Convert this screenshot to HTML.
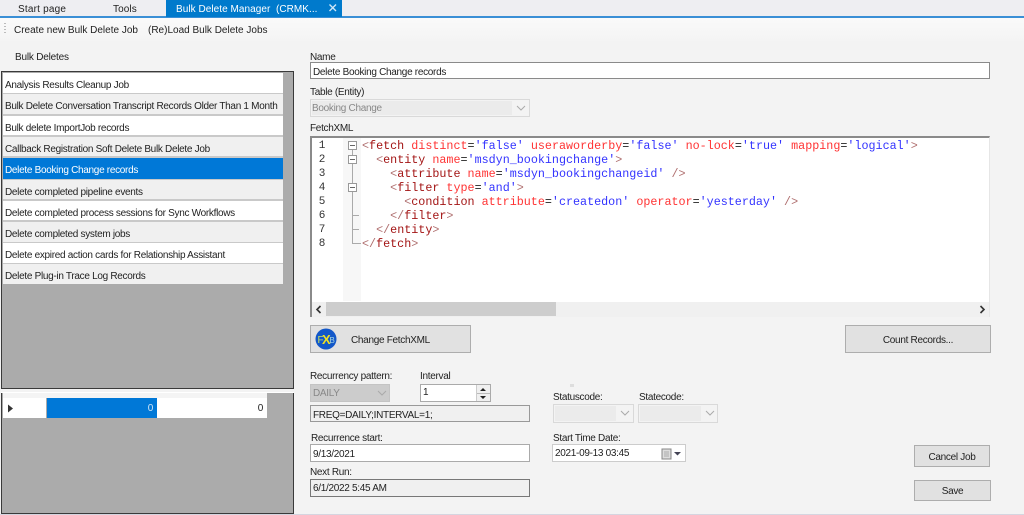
<!DOCTYPE html>
<html><head><meta charset="utf-8"><style>
html,body{margin:0;padding:0;width:1024px;height:515px;overflow:hidden;background:#f3f3f3}
body{position:relative;font-family:"Liberation Sans",sans-serif;font-size:10px;color:#222;letter-spacing:-.3px}
.a{position:absolute;white-space:nowrap}
.t{position:absolute;white-space:nowrap;line-height:12px}
.r{position:absolute;left:3px;width:280px;height:19.5px;line-height:24px;padding-top:1px;padding-left:2px;box-sizing:border-box;overflow:hidden}
.b{position:absolute;background:#e1e1e1;border:1px solid #adadad;box-sizing:border-box;text-align:center;color:#222}
.i{position:absolute;box-sizing:border-box;border:1px solid #a0a0a0;background:#fff;padding-left:2px;color:#222}
.c{position:absolute;left:362px;font-family:"Liberation Mono",monospace;font-size:11.73px;line-height:14px;white-space:pre;color:#a31515;letter-spacing:0}
.c b{font-weight:normal;color:#f33}.c i{font-style:normal;color:#33f}.c u{text-decoration:none;color:#222}
.c s{text-decoration:none;color:#b07070}
.n{position:absolute;left:315px;width:14px;text-align:center;font-family:"Liberation Mono",monospace;font-size:11px;line-height:14px;color:#333;letter-spacing:0}
.f{position:absolute;left:348px;width:9px;height:9px;border:1px solid #999;background:#fff;box-sizing:border-box}
.f:after{content:"";position:absolute;left:1px;top:3px;width:5px;height:1px;background:#666}
</style></head><body>

<!-- tab bar -->
<div class="a" style="left:0;top:0;width:1024px;height:16px;background:#eeeef2"></div>
<div class="a" style="left:0;top:16px;width:1024px;height:2px;background:#3a8fd6"></div>
<div class="t" style="left:18px;top:4px;letter-spacing:.2px">Start page</div>
<div class="t" style="left:113px;top:4px;letter-spacing:.1px">Tools</div>
<div class="a" style="left:166px;top:0;width:176px;height:17px;background:#007acc"></div>
<div class="t" style="left:176px;top:4px;color:#fff;letter-spacing:.05px">Bulk Delete Manager&nbsp; (CRMK...</div>
<svg class="a" style="left:328px;top:3px" width="10" height="10"><path d="M1.5 1.5L8 8M8 1.5L1.5 8" stroke="#cfe6f7" stroke-width="1.4"/></svg>

<!-- toolbar -->
<div class="a" style="left:0;top:18px;width:1024px;height:23px;background:linear-gradient(#fafafa,#f4f4f4)"></div>
<div class="a" style="left:4px;top:23px;width:2px;height:12px;background:repeating-linear-gradient(#bbb 0 1px,transparent 1px 3px)"></div>
<div class="t" style="left:14px;top:25px;letter-spacing:0">Create new Bulk Delete Job</div>
<div class="t" style="left:148px;top:25px;letter-spacing:0">(Re)Load Bulk Delete Jobs</div>
<div class="t" style="left:15px;top:52px;letter-spacing:-.2px">Bulk Deletes</div>

<!-- list -->
<div class="a" style="left:1px;top:71px;width:293px;height:318px;background:#ababab;border:1px solid #3a3a3a;box-sizing:border-box"></div>
<div class="a" style="left:3px;top:73px;width:280px;height:211px;background:#c9c9c9"></div>
<div class="r" style="top:73px;background:#fff">Analysis Results Cleanup Job</div>
<div class="r" style="top:94px;background:#f0f0f0">Bulk Delete Conversation Transcript Records Older Than 1 Month</div>
<div class="r" style="top:115.5px;background:#fff">Bulk delete ImportJob records</div>
<div class="r" style="top:136.5px;background:#f0f0f0">Callback Registration Soft Delete Bulk Delete Job</div>
<div class="r" style="top:157.5px;height:21px;background:#0078d7;color:#fff">Delete Booking Change records</div>
<div class="r" style="top:179.5px;background:#f0f0f0">Delete completed pipeline events</div>
<div class="r" style="top:200.5px;background:#fff">Delete completed process sessions for Sync Workflows</div>
<div class="r" style="top:222px;background:#f0f0f0">Delete completed system jobs</div>
<div class="r" style="top:243px;background:#fff">Delete expired action cards for Relationship Assistant</div>
<div class="r" style="top:264px;background:#f0f0f0">Delete Plug-in Trace Log Records</div>

<!-- lower grid -->
<div class="a" style="left:1px;top:392px;width:293px;height:122px;background:#ababab;border:1px solid #3a3a3a;border-top:0;box-sizing:border-box"></div>
<div class="a" style="left:1px;top:392px;width:293px;height:1px;background:#fff"></div>
<div class="a" style="left:3px;top:393px;width:264px;height:5px;background:#f4f4f4"></div>
<div class="a" style="left:3px;top:398px;width:43px;height:20px;background:#fff"></div>
<div class="a" style="left:47px;top:398px;width:110px;height:20px;background:#0078d7;color:#cfe6f7;text-align:right;line-height:21px;padding-right:4px;box-sizing:border-box">0</div>
<div class="a" style="left:157px;top:398px;width:110px;height:20px;background:#fff;text-align:right;line-height:21px;padding-right:4px;box-sizing:border-box">0</div>
<svg class="a" style="left:7px;top:404px" width="7" height="9"><path d="M1 .5L6 4.5L1 8.5Z" fill="#333"/></svg>

<!-- right form -->
<div class="t" style="left:310px;top:52px">Name</div>
<div class="i" style="left:310px;top:62px;width:680px;height:17px;line-height:19px;border-color:#8a8a8a">Delete Booking Change records</div>
<div class="t" style="left:310px;top:87px">Table (Entity)</div>
<div class="a" style="left:310px;top:99px;width:220px;height:18px;border:1px solid #d9d9d9;background:#f3f3f3;box-sizing:border-box"></div>
<div class="a" style="left:312px;top:101px;width:200px;height:14px;background:#ebebeb;line-height:16px;color:#888">Booking Change</div>
<svg class="a" style="left:516px;top:105px" width="10" height="7"><path d="M1 1L5 5L9 1" fill="none" stroke="#aaa"/></svg>
<div class="t" style="left:310px;top:123px">FetchXML</div>

<!-- editor -->
<div class="a" style="left:310px;top:136px;width:680px;height:181px;background:#fff;border-top:2px solid #8a8a8a;border-left:2px solid #8a8a8a;border-right:1px solid #e6e6e6;box-sizing:border-box"></div>
<div class="a" style="left:343px;top:138px;width:18px;height:163px;background:#f7f7f7"></div>
<div class="n" style="top:139px">1</div><div class="n" style="top:153px">2</div><div class="n" style="top:167px">3</div><div class="n" style="top:181px">4</div><div class="n" style="top:195px">5</div><div class="n" style="top:209px">6</div><div class="n" style="top:223px">7</div><div class="n" style="top:237px">8</div>
<div class="a" style="left:352px;top:145px;width:1px;height:98px;background:#aaa"></div>
<div class="a" style="left:352px;top:215px;width:7px;height:1px;background:#aaa"></div>
<div class="a" style="left:352px;top:229px;width:7px;height:1px;background:#aaa"></div>
<div class="a" style="left:352px;top:243px;width:9px;height:1px;background:#aaa"></div>
<div class="f" style="top:141px"></div><div class="f" style="top:155px"></div><div class="f" style="top:183px"></div>
<div class="c" style="top:139px"><s>&lt;</s>fetch <b>distinct</b><u>=</u><i>'false'</i> <b>useraworderby</b><u>=</u><i>'false'</i> <b>no-lock</b><u>=</u><i>'true'</i> <b>mapping</b><u>=</u><i>'logical'</i><s>&gt;</s></div>
<div class="c" style="top:153px">  <s>&lt;</s>entity <b>name</b><u>=</u><i>'msdyn_bookingchange'</i><s>&gt;</s></div>
<div class="c" style="top:167px">    <s>&lt;</s>attribute <b>name</b><u>=</u><i>'msdyn_bookingchangeid'</i> <s>/&gt;</s></div>
<div class="c" style="top:181px">    <s>&lt;</s>filter <b>type</b><u>=</u><i>'and'</i><s>&gt;</s></div>
<div class="c" style="top:195px">      <s>&lt;</s>condition <b>attribute</b><u>=</u><i>'createdon'</i> <b>operator</b><u>=</u><i>'yesterday'</i> <s>/&gt;</s></div>
<div class="c" style="top:209px">    <s>&lt;/</s>filter<s>&gt;</s></div>
<div class="c" style="top:223px">  <s>&lt;/</s>entity<s>&gt;</s></div>
<div class="c" style="top:237px"><s>&lt;/</s>fetch<s>&gt;</s></div>
<!-- hscroll -->
<div class="a" style="left:312px;top:302px;width:677px;height:15px;background:#f0f0f0"></div>
<div class="a" style="left:326px;top:302px;width:230px;height:14px;background:#cdcdcd"></div>
<svg class="a" style="left:315px;top:305px" width="8" height="9"><path d="M5.5 1L2 4.5L5.5 8" fill="none" stroke="#333" stroke-width="1.6"/></svg>
<svg class="a" style="left:978px;top:305px" width="8" height="9"><path d="M2.5 1L6 4.5L2.5 8" fill="none" stroke="#333" stroke-width="1.6"/></svg>

<!-- buttons -->
<div class="b" style="left:310px;top:325px;width:161px;height:28px;line-height:30px"><span style="position:absolute;left:40px;top:0">Change FetchXML</span></div>
<svg class="a" style="left:315px;top:328px;letter-spacing:0" width="22" height="22"><circle cx="11" cy="11" r="10.5" fill="#1257c9"/><text x="2.5" y="15" font-family="Liberation Sans" font-size="10" fill="#c8e060">F</text><text x="7" y="16" font-family="Liberation Sans" font-size="13" font-weight="bold" fill="#f0e020">X</text><text x="14.5" y="15" font-family="Liberation Sans" font-size="8" fill="#a8d8e0">B</text></svg>
<div class="b" style="left:845px;top:325px;width:146px;height:28px;line-height:30px">Count Records...</div>

<div class="t" style="left:310px;top:371px">Recurrency pattern:</div>
<div class="t" style="left:420px;top:371px">Interval</div>
<div class="a" style="left:310px;top:384px;width:80px;height:18px;background:#ccc;border:1px solid #c4c4c4;box-sizing:border-box;line-height:17px;color:#888;padding-left:2px">DAILY</div>
<svg class="a" style="left:377px;top:390px" width="10" height="7"><path d="M1 1L5 5L9 1" fill="none" stroke="#aaa"/></svg>
<div class="i" style="left:420px;top:384px;width:71px;height:18px;line-height:16px;border-color:#aaa">1</div>
<div class="a" style="left:476px;top:385px;width:14px;height:16px;background:#f0f0f0;border-left:1px solid #ccc;box-sizing:border-box"></div>
<div class="a" style="left:477px;top:393px;width:13px;height:1px;background:#bbb"></div>
<svg class="a" style="left:478px;top:386px" width="10" height="15"><path d="M5 2L8 5H2Z M5 13L2 10H8Z" fill="#222"/></svg>
<div class="i" style="left:310px;top:405px;width:220px;height:17px;line-height:20px;background:#f0f0f0;border-color:#999">FREQ=DAILY;INTERVAL=1;</div>

<div class="a" style="left:570px;top:384px;width:4px;height:3px;background:#ddd"></div>
<div class="t" style="left:553px;top:392px">Statuscode:</div>
<div class="t" style="left:639px;top:392px">Statecode:</div>
<div class="a" style="left:553px;top:404px;width:81px;height:19px;background:#f3f3f3;border:1px solid #d9d9d9;box-sizing:border-box"></div>
<div class="a" style="left:555px;top:406px;width:61px;height:15px;background:#ebebeb"></div>
<svg class="a" style="left:620px;top:410px" width="10" height="7"><path d="M1 1L5 5L9 1" fill="none" stroke="#aaa"/></svg>
<div class="a" style="left:638px;top:404px;width:80px;height:19px;background:#f3f3f3;border:1px solid #d9d9d9;box-sizing:border-box"></div>
<div class="a" style="left:640px;top:406px;width:61px;height:15px;background:#ebebeb"></div>
<svg class="a" style="left:705px;top:410px" width="10" height="7"><path d="M1 1L5 5L9 1" fill="none" stroke="#aaa"/></svg>

<div class="t" style="left:311px;top:433px">Recurrence start:</div>
<div class="i" style="left:310px;top:444px;width:220px;height:18px;line-height:19px;border-color:#aaa">9/13/2021</div>
<div class="t" style="left:310px;top:467px">Next Run:</div>
<div class="i" style="left:310px;top:479px;width:220px;height:18px;line-height:17px;background:#f0f0f0;border-color:#777">6/1/2022 5:45 AM</div>

<div class="t" style="left:553px;top:433px">Start Time Date:</div>
<div class="i" style="left:552px;top:444px;width:134px;height:18px;line-height:17px;border-color:#ccc">2021-09-13 03:45</div>
<svg class="a" style="left:661px;top:448px" width="22" height="12"><rect x="1" y="1" width="9" height="10" fill="#ddd" stroke="#888"/><path d="M3 4H8M3 6H8M3 8H8" stroke="#aaa"/><path d="M13 4H20L16.5 7.5Z" fill="#445"/></svg>

<div class="b" style="left:914px;top:445px;width:76px;height:22px;line-height:23px">Cancel Job</div>
<div class="b" style="left:914px;top:480px;width:77px;height:21px;line-height:21px">Save</div>

<div class="a" style="left:0;top:514px;width:1024px;height:1px;background:#d5d5e0"></div>
</body></html>
